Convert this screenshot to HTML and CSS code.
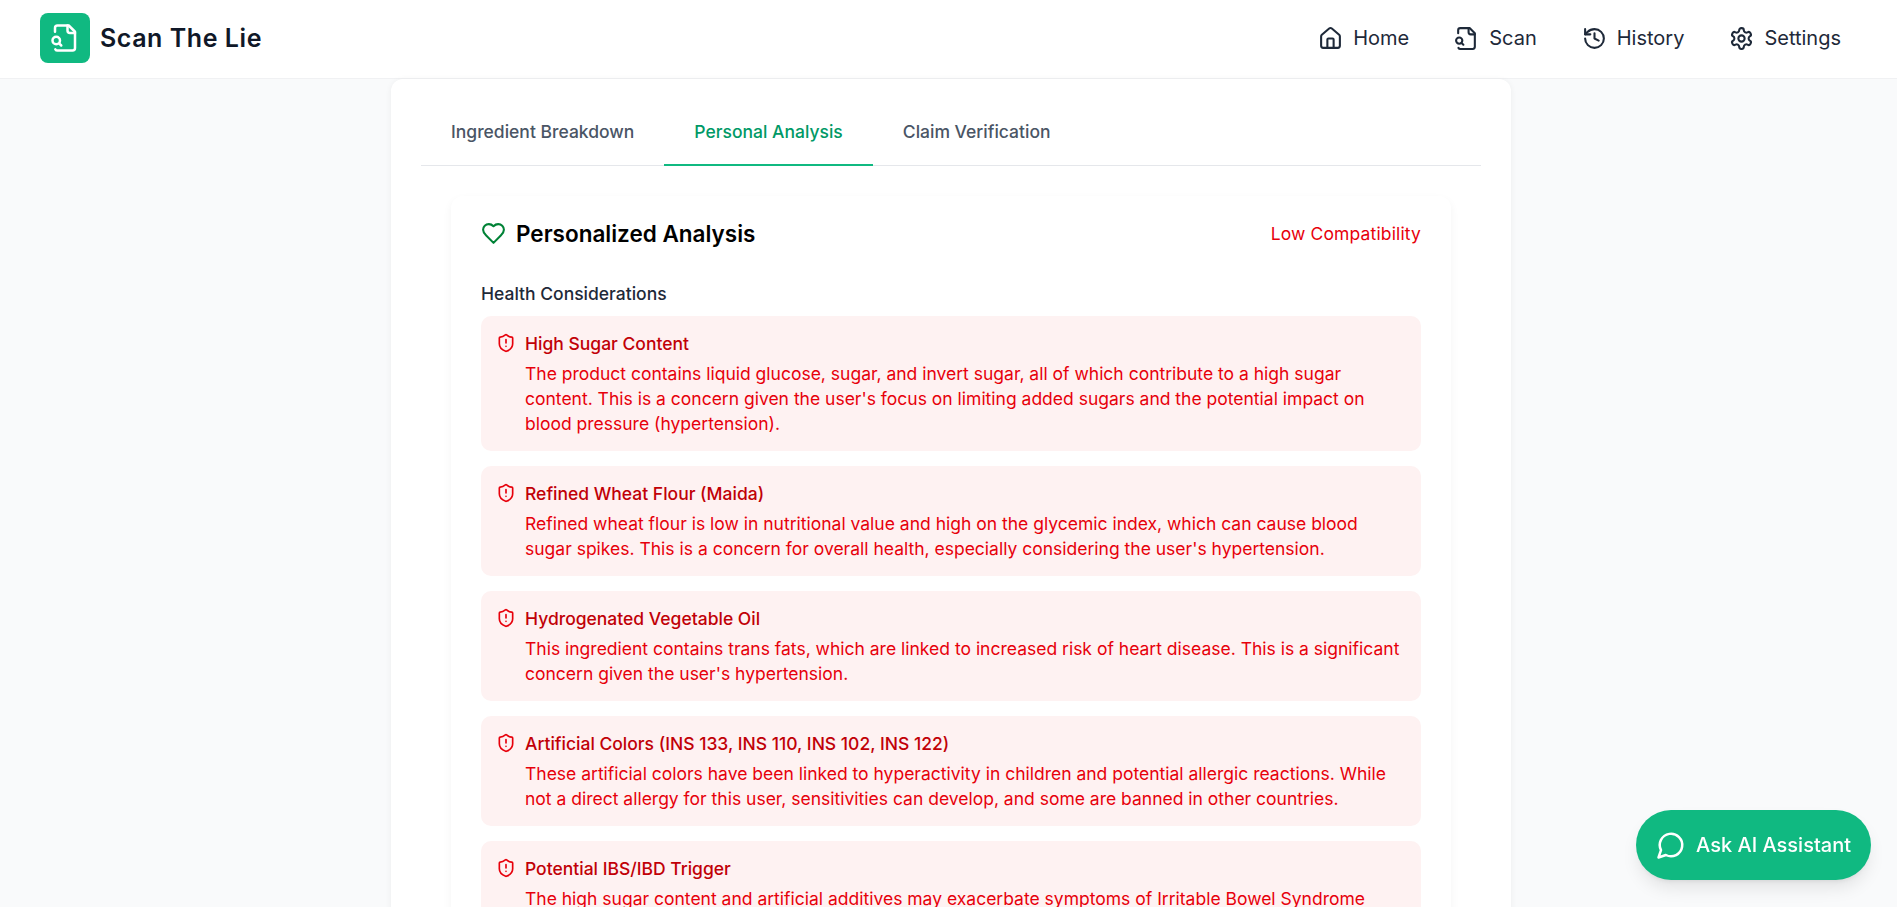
FILE: index.html
```html
<!DOCTYPE html>
<html lang="en">
<head>
    <meta charset="UTF-8">
    <meta name="viewport" content="width=device-width, initial-scale=1.0">
    <title>Scan The Lie</title>
    <link rel="stylesheet" href="styles.css">
</head>
<body>

    <!-- Top navigation -->
    <header class="navbar">
        <div class="brand">
            <span class="brand-logo">
                <svg class="icon-logo" viewBox="0 0 24 24"><path d="M14 2v4a2 2 0 0 0 2 2h4"/><path d="M4.268 21a2 2 0 0 0 1.727 1H18a2 2 0 0 0 2-2V7l-5-5H6a2 2 0 0 0-2 2v3"/><path d="m9 18-1.5-1.5"/><circle cx="5" cy="14" r="3"/></svg>
            </span>
            <span class="brand-name">Scan The Lie</span>
        </div>
        <nav class="nav-links">
            <a class="nav-link">
                <svg class="icon" viewBox="0 0 24 24"><path d="M15 21v-8a1 1 0 0 0-1-1h-4a1 1 0 0 0-1 1v8"/><path d="M3 10a2 2 0 0 1 .709-1.528l7-5.999a2 2 0 0 1 2.582 0l7 5.999A2 2 0 0 1 21 10v9a2 2 0 0 1-2 2H5a2 2 0 0 1-2-2z"/></svg>
                Home
            </a>
            <a class="nav-link">
                <svg class="icon" viewBox="0 0 24 24"><path d="M14 2v4a2 2 0 0 0 2 2h4"/><path d="M4.268 21a2 2 0 0 0 1.727 1H18a2 2 0 0 0 2-2V7l-5-5H6a2 2 0 0 0-2 2v3"/><path d="m9 18-1.5-1.5"/><circle cx="5" cy="14" r="3"/></svg>
                Scan
            </a>
            <a class="nav-link">
                <svg class="icon" viewBox="0 0 24 24"><path d="M3 12a9 9 0 1 0 9-9 9.75 9.75 0 0 0-6.74 2.74L3 8"/><path d="M3 3v5h5"/><path d="M12 7v5l4 2"/></svg>
                History
            </a>
            <a class="nav-link">
                <svg class="icon" viewBox="0 0 24 24"><path d="M12.22 2h-.44a2 2 0 0 0-2 2v.18a2 2 0 0 1-1 1.73l-.43.25a2 2 0 0 1-2 0l-.15-.08a2 2 0 0 0-2.73.73l-.22.38a2 2 0 0 0 .73 2.73l.15.1a2 2 0 0 1 1 1.72v.51a2 2 0 0 1-1 1.74l-.15.09a2 2 0 0 0-.73 2.73l.22.38a2 2 0 0 0 2.73.73l.15-.08a2 2 0 0 1 2 0l.43.25a2 2 0 0 1 1 1.73V20a2 2 0 0 0 2 2h.44a2 2 0 0 0 2-2v-.18a2 2 0 0 1 1-1.73l.43-.25a2 2 0 0 1 2 0l.15.08a2 2 0 0 0 2.73-.73l.22-.39a2 2 0 0 0-.73-2.73l-.15-.08a2 2 0 0 1-1-1.74v-.5a2 2 0 0 1 1-1.74l.15-.09a2 2 0 0 0 .73-2.73l-.22-.38a2 2 0 0 0-2.73-.73l-.15.08a2 2 0 0 1-2 0l-.43-.25a2 2 0 0 1-1-1.73V4a2 2 0 0 0-2-2z"/><circle cx="12" cy="12" r="3"/></svg>
                Settings
            </a>
        </nav>
    </header>

    <main class="page">
        <div class="result-card">

            <!-- Tabs -->
            <div class="tabs">
                <button class="tab">Ingredient Breakdown</button>
                <button class="tab active">Personal Analysis</button>
                <button class="tab">Claim Verification</button>
            </div>

            <section class="analysis-card">
                <div class="analysis-header">
                    <h2 class="analysis-title">
                        <svg class="icon icon-heart" viewBox="0 0 24 24"><path d="M19 14c1.49-1.46 3-3.21 3-5.5A5.5 5.5 0 0 0 16.5 3c-1.76 0-3 .5-4.5 2-1.5-1.5-2.74-2-4.5-2A5.5 5.5 0 0 0 2 8.5c0 2.3 1.5 4.05 3 5.5l7 7Z"/></svg>
                        Personalized Analysis
                    </h2>
                    <span class="compatibility">Low Compatibility</span>
                </div>

                <h3 class="section-title">Health Considerations</h3>

                <div class="warning-list">
                    <div class="warning">
                        <svg class="icon icon-shield" viewBox="0 0 24 24"><path d="M20 13c0 5-3.5 7.5-7.66 8.95a1 1 0 0 1-.67-.01C7.5 20.5 4 18 4 13V6a1 1 0 0 1 1-1c2 0 4.5-1.2 6.24-2.72a1.17 1.17 0 0 1 1.52 0C14.51 3.81 17 5 19 5a1 1 0 0 1 1 1z"/><path d="M12 8v4"/><path d="M12 16h.01"/></svg>
                        <div>
                            <h4 class="warning-title">High Sugar Content</h4>
                            <p class="warning-text">The product contains liquid glucose, sugar, and invert sugar, all of which contribute to a high sugar content. This is a concern given the user's focus on limiting added sugars and the potential impact on blood pressure (hypertension).</p>
                        </div>
                    </div>
                    <div class="warning">
                        <svg class="icon icon-shield" viewBox="0 0 24 24"><path d="M20 13c0 5-3.5 7.5-7.66 8.95a1 1 0 0 1-.67-.01C7.5 20.5 4 18 4 13V6a1 1 0 0 1 1-1c2 0 4.5-1.2 6.24-2.72a1.17 1.17 0 0 1 1.52 0C14.51 3.81 17 5 19 5a1 1 0 0 1 1 1z"/><path d="M12 8v4"/><path d="M12 16h.01"/></svg>
                        <div>
                            <h4 class="warning-title">Refined Wheat Flour (Maida)</h4>
                            <p class="warning-text">Refined wheat flour is low in nutritional value and high on the glycemic index, which can cause blood sugar spikes. This is a concern for overall health, especially considering the user's hypertension.</p>
                        </div>
                    </div>
                    <div class="warning">
                        <svg class="icon icon-shield" viewBox="0 0 24 24"><path d="M20 13c0 5-3.5 7.5-7.66 8.95a1 1 0 0 1-.67-.01C7.5 20.5 4 18 4 13V6a1 1 0 0 1 1-1c2 0 4.5-1.2 6.24-2.72a1.17 1.17 0 0 1 1.52 0C14.51 3.81 17 5 19 5a1 1 0 0 1 1 1z"/><path d="M12 8v4"/><path d="M12 16h.01"/></svg>
                        <div>
                            <h4 class="warning-title">Hydrogenated Vegetable Oil</h4>
                            <p class="warning-text">This ingredient contains trans fats, which are linked to increased risk of heart disease. This is a significant concern given the user's hypertension.</p>
                        </div>
                    </div>
                    <div class="warning">
                        <svg class="icon icon-shield" viewBox="0 0 24 24"><path d="M20 13c0 5-3.5 7.5-7.66 8.95a1 1 0 0 1-.67-.01C7.5 20.5 4 18 4 13V6a1 1 0 0 1 1-1c2 0 4.5-1.2 6.24-2.72a1.17 1.17 0 0 1 1.52 0C14.51 3.81 17 5 19 5a1 1 0 0 1 1 1z"/><path d="M12 8v4"/><path d="M12 16h.01"/></svg>
                        <div>
                            <h4 class="warning-title">Artificial Colors (INS 133, INS 110, INS 102, INS 122)</h4>
                            <p class="warning-text">These artificial colors have been linked to hyperactivity in children and potential allergic reactions. While not a direct allergy for this user, sensitivities can develop, and some are banned in other countries.</p>
                        </div>
                    </div>
                    <div class="warning">
                        <svg class="icon icon-shield" viewBox="0 0 24 24"><path d="M20 13c0 5-3.5 7.5-7.66 8.95a1 1 0 0 1-.67-.01C7.5 20.5 4 18 4 13V6a1 1 0 0 1 1-1c2 0 4.5-1.2 6.24-2.72a1.17 1.17 0 0 1 1.52 0C14.51 3.81 17 5 19 5a1 1 0 0 1 1 1z"/><path d="M12 8v4"/><path d="M12 16h.01"/></svg>
                        <div>
                            <h4 class="warning-title">Potential IBS/IBD Trigger</h4>
                            <p class="warning-text">The high sugar content and artificial additives may exacerbate symptoms of Irritable Bowel Syndrome (IBS) and Inflammatory Bowel Disease (IBD).</p>
                        </div>
                    </div>
                </div>
            </section>
        </div>
    </main>

    <button class="assistant-btn">
        <svg class="icon icon-chat" viewBox="0 0 24 24"><path d="M7.9 20A9 9 0 1 0 4 16.1L2 22Z"/></svg>
        Ask AI Assistant
    </button>

</body>
</html>
```

FILE: styles.css
```css
* {
    box-sizing: border-box;
}

html, body {
    height: 100%;
    overflow: hidden;
}

body {
    margin: 0;
    font-family: Inter, "Liberation Sans", sans-serif;
    background-color: #f9fafb;
    color: #101828;
}

.icon {
    width: 25px;
    height: 25px;
    flex-shrink: 0;
    fill: none;
    stroke: currentColor;
    stroke-width: 2;
    stroke-linecap: round;
    stroke-linejoin: round;
}

/* Navbar */
.navbar {
    height: 79px;
    padding: 0 56px 2px 40px;
    display: flex;
    align-items: center;
    justify-content: space-between;
    background-color: #fff;
    border-bottom: 1px solid #f0f1f3;
}

.brand {
    display: flex;
    align-items: center;
    gap: 10px;
}

.brand-logo {
    width: 50px;
    height: 50px;
    display: flex;
    align-items: center;
    justify-content: center;
    background-color: #10b981;
    border-radius: 8px;
}

.icon-logo {
    width: 30px;
    height: 30px;
    fill: none;
    stroke: #fff;
    stroke-width: 2;
    stroke-linecap: round;
    stroke-linejoin: round;
}

.brand-name {
    font-size: 25px;
    font-weight: 600;
    letter-spacing: 0.55px;
    color: #101828;
}

.nav-links {
    display: flex;
    gap: 45px;
}

.nav-link {
    display: flex;
    align-items: center;
    gap: 10px;
    font-size: 20px;
    color: #1e2939;
}

/* Main card */
.page {
    width: 1125px;
    padding-left: 5px;
    margin: 0 auto;
}

.result-card {
    padding: 0 30px;
    background-color: #fff;
    border-radius: 12px;
    box-shadow: 0 1px 6px rgba(0, 0, 0, 0.06);
}

.tabs {
    display: flex;
    border-bottom: 1px solid #e5e7eb;
}

.tab {
    padding: 40px 30px 20px;
    background: none;
    border: none;
    border-bottom: 2px solid transparent;
    margin-bottom: -1px;
    font-family: inherit;
    font-size: 17.5px;
    font-weight: 500;
    line-height: 25px;
    color: #4a5565;
}

.tab.active {
    color: #009966;
    border-bottom-color: #10b981;
}

.analysis-card {
    margin: 30px 30px 0;
    padding: 20px 30px 30px;
    background-color: #fff;
    border-radius: 12px;
    box-shadow: 0 4px 10px rgba(0, 0, 0, 0.05);
}

.analysis-header {
    display: flex;
    align-items: center;
    justify-content: space-between;
    margin-bottom: 30px;
}

.analysis-title {
    margin: 0;
    display: flex;
    align-items: center;
    gap: 10px;
    font-size: 22.5px;
    font-weight: 600;
    line-height: 35px;
    color: #000;
}

.icon-heart {
    color: #008236;
}

.compatibility {
    font-size: 17.5px;
    letter-spacing: 0.14px;
    line-height: 25px;
    color: #e7000b;
}

.section-title {
    margin: 0 0 10px;
    font-size: 17.5px;
    font-weight: 500;
    line-height: 25px;
    color: #1e2939;
}

.warning-list {
    display: flex;
    flex-direction: column;
    gap: 15px;
}

.warning {
    display: flex;
    gap: 9px;
    padding: 15px;
    background-color: #fef2f2;
    border-radius: 10px;
}

.icon-shield {
    width: 20px;
    height: 20px;
    margin-top: 2px;
    color: #e7000b;
}

.warning-title {
    margin: 0 0 5px;
    font-size: 17.5px;
    font-weight: 500;
    line-height: 25px;
    color: #c10007;
}

.warning-text {
    margin: 0;
    font-size: 17.5px;
    line-height: 25px;
    color: #e7000b;
}

/* Floating button */
.assistant-btn {
    position: fixed;
    right: 26px;
    bottom: 27px;
    height: 70px;
    padding: 0 20px;
    display: flex;
    align-items: center;
    gap: 10px;
    background-color: #10b981;
    color: #fff;
    border: none;
    border-radius: 35px;
    font-family: inherit;
    font-size: 20px;
    font-weight: 500;
    box-shadow: 0 10px 18px -3px rgba(0, 0, 0, 0.1), 0 4px 6px -4px rgba(0, 0, 0, 0.1);
}

.icon-chat {
    width: 30px;
    height: 30px;
}
```
